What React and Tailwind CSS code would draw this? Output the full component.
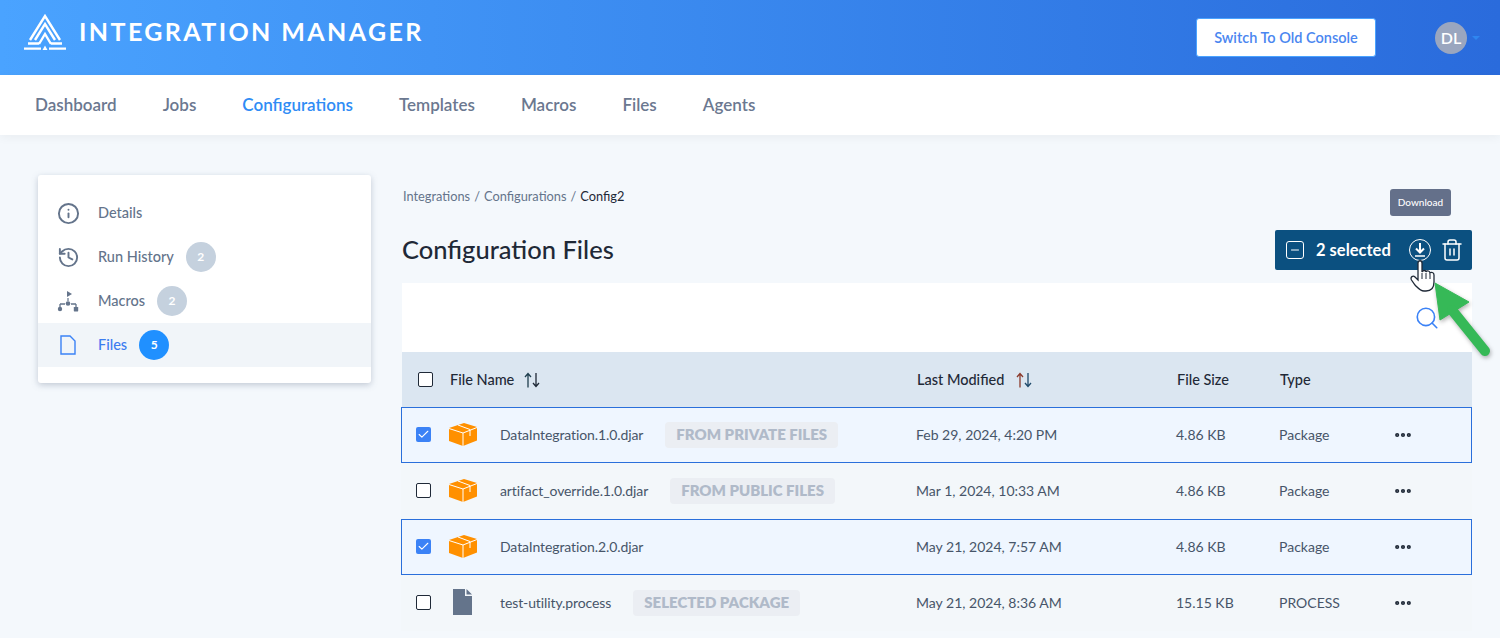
import { Info, History, Search, Trash2, MoreHorizontal, Minus, Check } from "lucide-react";

const navItems = ["Dashboard", "Jobs", "Configurations", "Templates", "Macros", "Files", "Agents"];

const files = [
  { name: "DataIntegration.1.0.djar", tag: "FROM PRIVATE FILES", modified: "Feb 29, 2024, 4:20 PM", size: "4.86 KB", type: "Package", checked: true },
  { name: "artifact_override.1.0.djar", tag: "FROM PUBLIC FILES", modified: "Mar 1, 2024, 10:33 AM", size: "4.86 KB", type: "Package" },
  { name: "DataIntegration.2.0.djar", modified: "May 21, 2024, 7:57 AM", size: "4.86 KB", type: "Package", checked: true },
  { name: "test-utility.process", tag: "SELECTED PACKAGE", modified: "May 21, 2024, 8:36 AM", size: "15.15 KB", type: "PROCESS", doc: true },
];

function Logo() {
  return (
    <svg width="42" height="36" viewBox="0 0 42 36" fill="none" stroke="white" strokeWidth="2.4">
      <path d="M6 26 L21 2 L36 26" />
      <path d="M11 26 L21 10 L31 26" />
      <path d="M15 30 L21 20 L27 30" />
      <path d="M4 29.5 H15 M27 29.5 H38 M0 34.6 H17 M25 34.6 H42" />
      <path d="M18.5 36 L21 31.5 L23.5 36 Z" fill="white" stroke="none" />
    </svg>
  );
}

function BoxIcon() {
  return (
    <svg width="28" height="23" viewBox="0 0 28 23">
      <path d="M0 5 L15 0 L28 4 V17.5 L14 23 L0 18 Z" fill="#ff9000" />
      <path d="M0 5.5 L14 10 L28 4.5 M14 10 V23 M9 2 L21 6.5 V13" fill="none" stroke="white" strokeWidth="1" />
    </svg>
  );
}

function DocIcon() {
  return (
    <svg width="20" height="27" viewBox="0 0 20 27">
      <path d="M1 0 H13 V7 H20 V26 H1 Z" fill="#64748b" />
      <path d="M14.5 0 L20 5.5 H14.5 Z" fill="#64748b" />
    </svg>
  );
}

function MacroIcon() {
  return (
    <svg width="22" height="22" viewBox="0 0 22 22" fill="#64748b" stroke="none">
      <path d="M10 1 L15 4 L10 7 Z" />
      <rect x="10.4" y="8" width="1.2" height="3" />
      <circle cx="11" cy="13.5" r="2.3" />
      <path d="M3 14 H8 M14 14 H19 M3 14 V17 M19 14 V17" fill="none" stroke="#64748b" strokeWidth="1.3" />
      <circle cx="3" cy="19" r="2.2" />
      <rect x="16.8" y="17" width="4.4" height="4.4" rx="0.6" />
    </svg>
  );
}

function Checkbox({ checked }) {
  if (checked) {
    return (
      <span className="flex h-[15px] w-[15px] items-center justify-center rounded-[2px] bg-[#3b82f6]">
        <Check size={13} strokeWidth={2} className="text-white" />
      </span>
    );
  }
  return <span className="block h-[15px] w-[15px] rounded-[2px] border-[1.5px] border-[#1f2937] bg-white" />;
}

function SortArrows({ upColor, downColor }) {
  return (
    <svg width="16" height="16" viewBox="0 0 16 16" fill="none" strokeWidth="1.3">
      <path d="M4 15.5 V1.5 M1 5 L4 1.5 L7 5" stroke={upColor} />
      <path d="M12 1 V14.5 M9 11 L12 14.5 L15 11" stroke={downColor} />
    </svg>
  );
}

function SideItem({ icon, label, count, active }) {
  return (
    <div className={`flex h-[44px] items-center ${active ? "bg-[#f1f5f9]" : ""}`}>
      <div className="flex w-[60px] justify-center">{icon}</div>
      <span className={`text-[14.5px] font-medium ${active ? "text-[#3b7cf0]" : "text-[#64748b]"}`}>{label}</span>
      {count && (
        <span className={`ml-[12px] flex h-[30px] w-[30px] items-center justify-center rounded-full text-[12px] font-bold text-white ${active ? "bg-[#2090ff]" : "bg-[#c5d1de]"}`}>
          {count}
        </span>
      )}
    </div>
  );
}

function FileRow({ file }) {
  return (
    <div className={`-ml-px grid h-[56px] w-[1071px] grid-cols-[47px_467px_260px_103px_115px_1fr] items-center border pb-[1px] text-[14px] text-[#475569] ${file.checked ? "border-[#2a6fdb] bg-[#eff6ff]" : "border-transparent bg-[#f3f7fa]"}`}>
      <div className="pl-[14px]">
        <Checkbox checked={file.checked} />
      </div>
      <div className="flex items-center">
        <div className="flex w-[51px]">{file.doc ? <span className="pl-[3px]"><DocIcon /></span> : <BoxIcon />}</div>
        <span className="tracking-[-0.1px]">{file.name}</span>
        {file.tag && (
          <span className="ml-[22px] flex h-[26px] items-center rounded-[4px] bg-[#ebeef3] px-[11px] text-[15px] font-extrabold text-[#b0bac9]">
            {file.tag}
          </span>
        )}
      </div>
      <div>{file.modified}</div>
      <div>{file.size}</div>
      <div>{file.type}</div>
      <div className="-ml-px">
        <MoreHorizontal size={20} strokeWidth={3} className="text-[#1f2937]" />
      </div>
    </div>
  );
}

export default function App() {
  return (
    <div className="relative h-[638px] w-[1500px] overflow-hidden bg-[#f4f8fc] font-['Lato',sans-serif]">
      <header className="flex h-[75px] items-center justify-between bg-gradient-to-r from-[#4aa3ff] to-[#2a6bdc] pl-[24px] pr-[24px]">
        <div className="flex items-center gap-[13px] pb-[11px]">
          <Logo />
          <span className="text-[25px] font-bold tracking-[2.4px] text-white">INTEGRATION MANAGER</span>
        </div>
        <div className="flex items-center">
          <button className="flex h-[39px] w-[180px] items-center justify-center rounded-[3px] border border-[#4aa3ff] bg-white text-[14.5px] font-semibold text-[#4a86f0]">
            Switch To Old Console
          </button>
          <div className="ml-[59px] flex h-[32px] w-[32px] items-center justify-center rounded-full bg-[#9aa6bf] text-[16px] font-semibold text-white">
            DL
          </div>
          <span className="ml-[5px] mr-[-4px] h-0 w-0 border-x-[4px] border-t-[4px] border-x-transparent border-t-[#2f86f0]" />
        </div>
      </header>

      <nav className="flex h-[60px] items-center gap-[46px] bg-white pl-[35px] shadow-[0_2px_10px_rgba(0,0,0,0.05)]">
        {navItems.map((item) => (
          <span key={item} className={`text-[17px] font-semibold ${item === "Configurations" ? "text-[#2f8cf5]" : "text-[#6b7890]"}`}>
            {item}
          </span>
        ))}
      </nav>

      <div className="flex items-start pl-[38px] pt-[40px]">
        <aside className="w-[333px] rounded-[3px] bg-white pb-[16px] pt-[16px] shadow-[0_2px_6px_rgba(100,116,139,0.35)]">
          <SideItem icon={<Info size={23} strokeWidth={2} className="text-[#64748b]" />} label="Details" />
          <SideItem icon={<History size={23} strokeWidth={2} className="text-[#64748b]" />} label="Run History" count="2" />
          <SideItem icon={<MacroIcon />} label="Macros" count="2" />
          <SideItem
            active
            icon={
              <svg width="16" height="20" viewBox="0 0 16 20" fill="none" stroke="#3b82f6" strokeWidth="1.4">
                <path d="M1 1 H10 L15 6 V19 H1 Z" />
              </svg>
            }
            label="Files"
            count="5"
          />
        </aside>

        <main className="ml-[31px] w-[1070px]">
          <div className="flex h-[42px] items-center pl-[1px] pt-[1px] text-[12.8px] text-[#64748b]">
            <span>Integrations</span>
            <span className="mx-[4px]">/</span>
            <span>Configurations</span>
            <span className="mx-[4px]">/</span>
            <span className="text-[#1f2937]">Config2</span>
          </div>
          <div className="flex h-[66px] items-center justify-between">
            <h1 className="pb-[2px] text-[25.5px] font-medium text-[#1f2937]">Configuration Files</h1>
            <div className="flex h-[40px] w-[197px] items-center rounded-[2px] bg-[#0b5080] pl-[11px] text-white">
              <span className="flex h-[18px] w-[18px] items-center justify-center rounded-[3px] border-[1.5px] border-white">
                <Minus size={12} />
              </span>
              <span className="ml-[12px] w-[76px] whitespace-nowrap text-[16.5px] font-bold">2 selected</span>
              <span className="ml-[17px] flex h-[22px] w-[22px] items-center justify-center rounded-full border-[1.5px] border-white">
                <svg width="12" height="14" viewBox="0 0 12 14" fill="none" stroke="white" strokeWidth="2">
                  <path d="M6 0 V9 M2 5.5 L6 9.5 L10 5.5" />
                  <path d="M1 13 H11" strokeWidth="1.5" />
                </svg>
              </span>
              <Trash2 size={24} strokeWidth={1.5} className="ml-[9px]" />
            </div>
          </div>
          <div className="flex h-[69px] justify-end bg-white pr-[32px] pt-[22px]">
            <Search size={26} strokeWidth={1.5} className="text-[#3b82f6]" />
          </div>
          <div className="grid h-[55px] grid-cols-[47px_468px_260px_103px_1fr] items-center bg-[#dbe6f1] text-[14.5px] font-medium text-[#1f2937]">
            <div className="pl-[16px]">
              <Checkbox />
            </div>
            <div className="flex items-center gap-[10px] pl-[1px]">
              File Name <SortArrows upColor="#1f3f4f" downColor="#1f2937" />
            </div>
            <div className="flex items-center gap-[12px]">
              Last Modified <SortArrows upColor="#8b3a2b" downColor="#1e4a6b" />
            </div>
            <div>File Size</div>
            <div>Type</div>
          </div>
          {files.map((file) => (
            <FileRow key={file.name} file={file} />
          ))}
        </main>
      </div>

      <div className="absolute left-[1390px] top-[189px] flex h-[27px] w-[61px] items-center justify-center rounded-[3px] bg-[#64708a] text-[10px] font-medium text-white">
        Download
      </div>

      <svg className="absolute left-[1410px] top-[260px]" width="26" height="33" viewBox="0 0 26 33">
        <path
          d="M8 3 C8 0 12 0 12 3 V12 C13 10 16 10 16 12 C17 10 20 11 20 13 C21 12 24 12 24 15 V22 C24 28 21 31 16 31 H14 C10 31 8 28 5 25 L1.5 20 C0 17 3 15 5 17 L8 20 Z"
          fill="white"
          stroke="#1f2937"
          strokeWidth="1.3"
        />
        <path d="M12 13 V19 M16 13 V19 M20 14 V19" stroke="#1f2937" strokeWidth="1" />
      </svg>

      <svg className="absolute left-[1430px] top-[278px] drop-shadow-[1px_2px_2px_rgba(0,0,0,0.3)]" width="66" height="84" viewBox="0 0 66 84">
        <path d="M5 5 L39 24 L10 42 Z" fill="#36b957" stroke="#36b957" strokeWidth="1" />
        <path d="M22 32 L55 73" stroke="#36b957" strokeWidth="10" strokeLinecap="round" />
      </svg>
    </div>
  );
}
